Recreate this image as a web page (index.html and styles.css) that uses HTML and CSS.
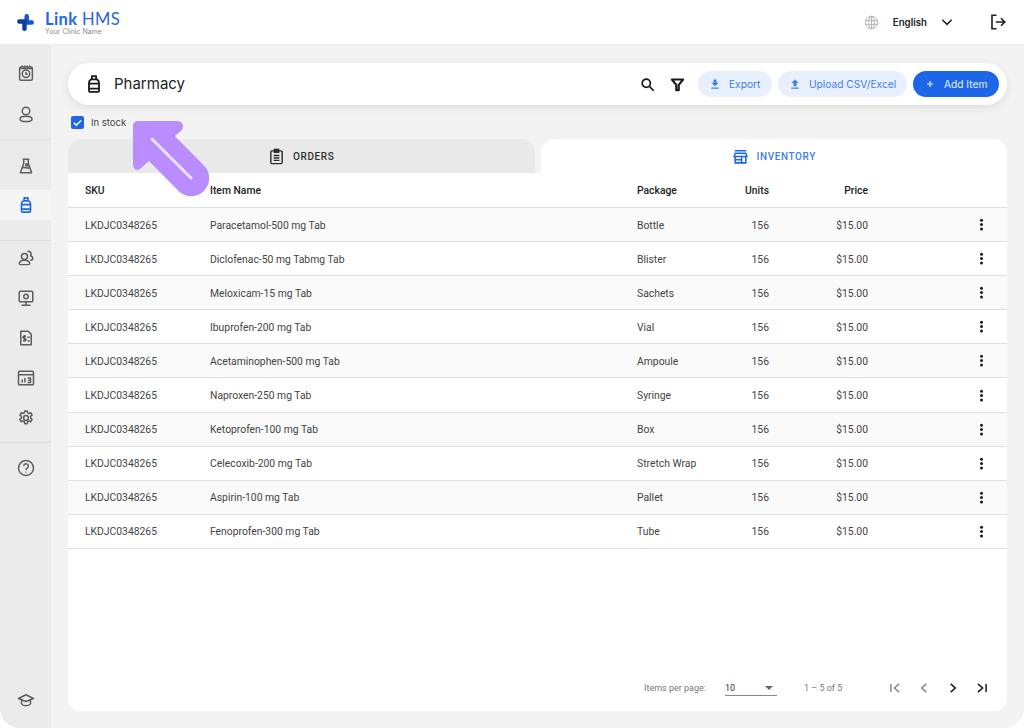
FILE: index.html
```html
<!DOCTYPE html>
<html lang="en">
<head>
    <meta charset="UTF-8">
    <title>Link HMS - Pharmacy</title>
    <link rel="stylesheet" href="styles.css">
</head>
<body>
    <svg class="defs" width="0" height="0">
        <symbol id="bottle" viewBox="0 0 24 24"><path d="M9.500 2.500h5v4h-5zM8.500 6.500h7c1.800 1 2.500 2.300 2.500 4v9.500a1.500 1.500 0 0 1-1.500 1.500h-9A1.500 1.500 0 0 1 6 20v-9.500c0-1.700.7-3 2.500-4zM6 11.500h12v6H6z" fill="none" stroke="currentColor" stroke-width="2.200" stroke-linejoin="round"/></symbol>
        <symbol id="kebab" viewBox="0 0 24 24"><circle cx="12" cy="5" r="2.400"/><circle cx="12" cy="12" r="2.400"/><circle cx="12" cy="19" r="2.400"/></symbol>
    </svg>
    <div class="app">
        <header class="topbar">
            <div class="brand">
                <svg class="brand-mark" viewBox="0 0 17 17" width="17" height="17" fill="none" stroke-width="4.500" stroke-linejoin="round" stroke-linecap="round"><path d="M9.700 2.300V8.500H14.700" stroke="#1557cf"/><path d="M2.300 7.500H7.500V14.700" stroke="#0d3f9e"/></svg>
                <div class="brand-text">
                    <div class="brand-name"><span class="brand-link">Link</span> HMS</div>
                    <div class="brand-sub">Your Clinic Name</div>
                </div>
            </div>
            <div class="topbar-right">
                <svg class="globe" viewBox="0 0 24 24" width="15" height="15" fill="none" stroke="#b5b5b5" stroke-width="1.600"><circle cx="12" cy="12" r="10"/><ellipse cx="12" cy="12" rx="4.500" ry="10"/><path d="M2.500 9h19M2.500 15h19M12 2v20"/></svg>
                <span class="lang">English</span>
                <svg class="chev" viewBox="0 0 24 24" width="14" height="14" fill="none" stroke="#222" stroke-width="2.600"><path d="M4 8l8 8 8-8"/></svg>
                <svg class="logout" viewBox="0 0 24 24" width="18" height="18" fill="none" stroke="#222" stroke-width="2.200"><path d="M10 3H4v18h6M9 12h12M16 7l5 5-5 5"/></svg>
            </div>
        </header>
        <div class="body">
            <nav class="sidebar">
                <div class="nav-group nav-schedule">
                    <a class="nav-item"><svg viewBox="0 0 24 24" class="nav-icon"><rect x="3.500" y="4" width="17" height="17.500" rx="2"/><circle cx="12" cy="13" r="5"/><path d="M12 10.500V13.500h2.200M3.500 6h17M7 2v2M10.300 2v2M13.700 2v2M17 2v2"/></svg></a>
                    <a class="nav-item"><svg viewBox="0 0 24 24" class="nav-icon"><circle cx="12" cy="8" r="5"/><ellipse cx="12" cy="18.500" rx="8" ry="3.500"/></svg></a>
                </div>
                <div class="nav-group nav-stores">
                    <a class="nav-item"><svg viewBox="0 0 24 24" class="nav-icon"><path d="M7.500 3h9M9 3v5.500L4.500 21h15L15 8.500V3M7 14.500c3-2 6 1.500 10 0"/><circle cx="13" cy="10.500" r="1.500"/></svg></a>
                    <a class="nav-item active"><svg class="nav-icon-solid"><use href="#bottle"/></svg></a>
                </div>
                <div class="nav-group nav-admin">
                    <a class="nav-item"><svg viewBox="0 0 24 24" class="nav-icon"><circle cx="10" cy="10" r="4"/><path d="M3 20c0-3.500 3-5 7-5s7 1.500 7 5c0 1-14 1-14 0zM14 3.500a3.500 3.500 0 0 1 4 5.500c2 .5 3 2 3 4 0 1.500-2 2-3.500 2"/></svg></a>
                    <a class="nav-item"><svg viewBox="0 0 24 24" class="nav-icon"><rect x="3" y="3" width="18" height="14" rx="1.500"/><circle cx="12" cy="10" r="3"/><path d="M12 17v4M6 21.500h12"/></svg></a>
                    <a class="nav-item"><svg viewBox="0 0 24 24" class="nav-icon"><path d="M5 3h10l4 4v14H5zM14 11h3M14 16h3M10 8v9M12 9.500H9.500a1.500 1.500 0 0 0 0 3h1a1.500 1.500 0 0 1 0 3H8"/></svg></a>
                    <a class="nav-item"><svg viewBox="0 0 24 24" class="nav-icon"><rect x="2" y="3" width="20" height="18" rx="1.500"/><path d="M2 7.500h20M7 18v-4M10.500 18v-6M14 12h4v3h-3M18 15v3h-4"/></svg></a>
                    <a class="nav-item"><svg viewBox="0 0 24 24" class="nav-icon"><circle cx="12" cy="12" r="3.200"/><path d="M10.300 2.500h3.400l.5 2.600 1.700.9 2.500-.9 1.700 3-2 1.700v2.400l2 1.700-1.700 3-2.500-.9-1.700.9-.5 2.600h-3.400l-.5-2.600-1.700-.9-2.500.9-1.700-3 2-1.700V9.800l-2-1.700 1.700-3 2.500.9 1.700-.9z"/></svg></a>
                </div>
                <div class="nav-group nav-help">
                    <a class="nav-item"><svg viewBox="0 0 24 24" class="nav-icon"><circle cx="12" cy="12" r="10"/><path d="M9 9.500a3 3 0 1 1 4.500 2.600c-1 .6-1.500 1.200-1.500 2.400M12 17v1"/></svg></a>
                </div>
                <a class="nav-item nav-bottom"><svg viewBox="0 0 24 24" class="nav-icon"><path d="M12 5L2 10l10 4 10-4zM6 12.500V17c2 3.500 10 3.500 12 0v-4.500"/></svg></a>
            </nav>
            <main class="content">
                <section class="page-head">
                    <svg class="head-bottle"><use href="#bottle"/></svg>
                    <h1 class="page-title">Pharmacy</h1>
                    <div class="actions">
                        <svg class="tool tool-search" viewBox="0 0 24 24" fill="none" stroke="#1a1a1a" stroke-width="2.800"><circle cx="10" cy="10" r="6.500"/><path d="M15 15l7 7"/></svg>
                        <svg class="tool tool-filter" viewBox="0 0 24 24" fill="none" stroke="#1a1a1a" stroke-width="3.400" stroke-linejoin="round"><path d="M3 4h18l-7 8.500V21h-4v-8.500z"/></svg>
                        <button class="btn btn-soft btn-export"><svg viewBox="0 0 24 24" class="btn-icon solid"><path d="M9 3h6v6.500h4.500L12 16.500 4.500 9.500H9zM4.500 19h15v2.500h-15z"/></svg>Export</button>
                        <button class="btn btn-soft btn-upload"><svg viewBox="0 0 24 24" class="btn-icon solid"><path d="M9 16.500h6V10h4.500L12 3 4.500 10H9zM4.500 19h15v2.500h-15z"/></svg>Upload CSV/Excel</button>
                        <button class="btn btn-primary"><svg viewBox="0 0 24 24" class="btn-icon"><path d="M12 6v12M6 12h12"/></svg>Add Item</button>
                    </div>
                </section>
                <label class="stock">
                    <span class="check"><svg viewBox="0 0 24 24" width="11" height="11" fill="none" stroke="#fff" stroke-width="3"><path d="M4 12.500l5.500 5.500L20 7"/></svg></span>
                    In stock
                </label>
                <div class="tabs">
                    <div class="tab">
                        <svg viewBox="0 0 24 24" width="17" height="17" fill="none" stroke="#2b2b2b" stroke-width="2"><rect x="4" y="4" width="16" height="18" rx="1.500"/><rect x="9" y="2" width="6" height="4" fill="#2b2b2b"/><path d="M8 10.500h8M8 14h8M8 17.500h8"/></svg>
                        ORDERS
                    </div>
                    <div class="tab tab-active">
                        <svg viewBox="0 0 24 24" width="17" height="17" fill="none" stroke="#1d66e8" stroke-width="2.200"><path d="M4 4h16M3 12l1.500-4.500h15L21 12zM4.500 12v9h15v-9M4.500 16.500h9M13.500 12v9"/></svg>
                        INVENTORY
                    </div>
                </div>
                <section class="panel">
                    <div class="row row-head">
                        <div>SKU</div><div>Item Name</div><div>Package</div><div class="num">Units</div><div class="num">Price</div><div></div>
                    </div>
                    <div class="row"><div>LKDJC0348265</div><div>Paracetamol-500 mg Tab</div><div>Bottle</div><div class="num">156</div><div class="num">$15.00</div><svg class="kebab"><use href="#kebab"/></svg></div>
                    <div class="row"><div>LKDJC0348265</div><div>Diclofenac-50 mg Tabmg Tab</div><div>Blister</div><div class="num">156</div><div class="num">$15.00</div><svg class="kebab"><use href="#kebab"/></svg></div>
                    <div class="row"><div>LKDJC0348265</div><div>Meloxicam-15 mg Tab</div><div>Sachets</div><div class="num">156</div><div class="num">$15.00</div><svg class="kebab"><use href="#kebab"/></svg></div>
                    <div class="row"><div>LKDJC0348265</div><div>Ibuprofen-200 mg Tab</div><div>Vial</div><div class="num">156</div><div class="num">$15.00</div><svg class="kebab"><use href="#kebab"/></svg></div>
                    <div class="row"><div>LKDJC0348265</div><div>Acetaminophen-500 mg Tab</div><div>Ampoule</div><div class="num">156</div><div class="num">$15.00</div><svg class="kebab"><use href="#kebab"/></svg></div>
                    <div class="row"><div>LKDJC0348265</div><div>Naproxen-250 mg Tab</div><div>Syringe</div><div class="num">156</div><div class="num">$15.00</div><svg class="kebab"><use href="#kebab"/></svg></div>
                    <div class="row"><div>LKDJC0348265</div><div>Ketoprofen-100 mg Tab</div><div>Box</div><div class="num">156</div><div class="num">$15.00</div><svg class="kebab"><use href="#kebab"/></svg></div>
                    <div class="row"><div>LKDJC0348265</div><div>Celecoxib-200 mg Tab</div><div>Stretch Wrap</div><div class="num">156</div><div class="num">$15.00</div><svg class="kebab"><use href="#kebab"/></svg></div>
                    <div class="row"><div>LKDJC0348265</div><div>Aspirin-100 mg Tab</div><div>Pallet</div><div class="num">156</div><div class="num">$15.00</div><svg class="kebab"><use href="#kebab"/></svg></div>
                    <div class="row"><div>LKDJC0348265</div><div>Fenoprofen-300 mg Tab</div><div>Tube</div><div class="num">156</div><div class="num">$15.00</div><svg class="kebab"><use href="#kebab"/></svg></div>
                    <div class="pager">
                        <span class="pager-label">Items per page:</span>
                        <span class="pager-select">10<i class="caret"></i></span>
                        <span class="pager-range">1 – 5 of 5</span>
                        <div class="pager-nav">
                            <svg viewBox="0 0 24 24" stroke="#8a8a8a"><path d="M5 5v14M19 5l-8 7 8 7"/></svg>
                            <svg viewBox="0 0 24 24" stroke="#8a8a8a"><path d="M16 5l-8 7 8 7"/></svg>
                            <svg viewBox="0 0 24 24" stroke="#1a1a1a"><path d="M8 5l8 7-8 7"/></svg>
                            <svg viewBox="0 0 24 24" stroke="#1a1a1a"><path d="M5 5l8 7-8 7M19 5v14"/></svg>
                        </div>
                    </div>
                </section>
            </main>
        </div>
    </div>
    <svg class="pointer" viewBox="0 0 100 100" width="100" height="100">
        <path d="M8 3H47C53 3 55 9 51 13L44.700 18L74.700 48.300A18 18 0 0 1 49.300 73.700L19 43L11 50C7 54 3 51 3 46V8C3 5 5 3 8 3Z" fill="#b98cff"/>
        <path d="M22 21L61 60" stroke="#ebe3fb" stroke-width="3" stroke-linecap="round"/>
    </svg>
</body>
</html>
```

FILE: styles.css
```css
* {
    box-sizing: border-box;
}
html, body {
    margin: 0;
    height: 100%;
    background: #ffffff;
    overflow: hidden;
}
body {
    font-family: 'Inter', sans-serif;
    color: #222;
}
.defs {
    position: absolute;
}
.app {
    width: 1024px;
    height: 728px;
    display: flex;
    flex-direction: column;
    border-radius: 20px;
    overflow: hidden;
    background: #f3f3f3;
}

/* top bar */
.topbar {
    height: 45px;
    flex: none;
    background: #fff;
    border-bottom: 1px solid #eeeeee;
    display: flex;
    align-items: center;
    justify-content: space-between;
    padding: 0 17px;
}
.brand {
    display: flex;
    align-items: center;
    gap: 11px;
}
.brand-mark {
    margin-top: 1px;
}
.brand-text {
    margin-top: 2px;
}
.brand-name {
    font-family: 'Lato', sans-serif;
    font-size: 16.500px;
    line-height: 17px;
    color: #2a66d9;
    letter-spacing: .4px;
    margin-top: -1px;
}
.brand-link {
    font-weight: 700;
    color: #1d66e8;
}
.brand-sub {
    font-size: 7px;
    line-height: 7px;
    color: #8d8d8d;
}
.topbar-right {
    display: flex;
    align-items: center;
}
.lang {
    font-size: 9.700px;
    font-weight: 600;
    margin-left: 14px;
}
.chev {
    margin-left: 13px;
}
.logout {
    margin-left: 35px;
}

/* sidebar */
.body {
    flex: 1;
    display: flex;
    min-height: 0;
}
.sidebar {
    width: 51px;
    flex: none;
    background: #ebebeb;
    display: flex;
    flex-direction: column;
}
.nav-group {
    display: flex;
    flex-direction: column;
    border-bottom: 1px solid #dedede;
}
.nav-schedule {
    height: 95px;
    padding-top: 13px;
    gap: 11px;
}
.nav-stores {
    height: 101px;
    padding-top: 11px;
    gap: 9px;
}
.nav-admin {
    height: 202px;
    padding-top: 2px;
    gap: 10px;
}
.nav-help {
    border-bottom: 0;
    padding-top: 10px;
}
.nav-item {
    height: 30px;
    flex: none;
    display: flex;
    align-items: center;
    justify-content: center;
}
.nav-item.active {
    background: #f5f5f5;
}
.nav-icon {
    width: 18px;
    height: 18px;
    fill: none;
    stroke: #5e5e5e;
    stroke-width: 2;
    stroke-linejoin: round;
}
.nav-icon-solid {
    width: 18px;
    height: 18px;
    color: #1d66e8;
}
.nav-bottom {
    margin-top: auto;
    height: 56px;
}

/* main column */
.content {
    flex: 1;
    padding: 18px 17px 17px;
    display: flex;
    flex-direction: column;
    min-width: 0;
}
.page-head {
    height: 42px;
    flex: none;
    background: #fff;
    border-radius: 21px;
    box-shadow: 0 3px 10px rgba(0, 0, 0, .09);
    display: flex;
    align-items: center;
    padding: 0 8px 0 16px;
}
.head-bottle {
    width: 20px;
    height: 20px;
    color: #1a1a1a;
}
.page-title {
    font-size: 15px;
    font-weight: 400;
    margin: -1px 0 0 10px;
}
.actions {
    margin-left: auto;
    display: flex;
    align-items: center;
}
.tool {
    width: 15px;
    height: 15px;
}
.tool-search {
    margin-right: 15px;
}
.tool-filter {
    margin-right: 13px;
}
.btn {
    height: 26px;
    border: 0;
    border-radius: 13px;
    font-family: 'Inter', sans-serif;
    font-size: 10.200px;
    display: flex;
    align-items: center;
    padding: 0;
    margin-left: 6px;
}
.tool + .tool + .btn {
    margin-left: 0;
}
.btn-soft {
    background: #e8f0fe;
    color: #3f7eea;
}
.btn-export {
    width: 74px;
}
.btn-upload {
    width: 129px;
}
.btn-primary {
    width: 86px;
    background: #1d66e8;
    color: #e8f0fe;
}
.btn-icon {
    width: 12px;
    height: 12px;
    margin: 0 8px 0 11px;
    fill: none;
    stroke: currentColor;
    stroke-width: 2.400;
}
.btn-icon.solid {
    fill: currentColor;
    stroke: none;
}
.stock {
    height: 34px;
    flex: none;
    display: flex;
    align-items: center;
    font-size: 9.500px;
    color: #444;
    padding-left: 3px;
}
.check {
    width: 13px;
    height: 13px;
    background: #1d66e8;
    border-radius: 2px;
    display: flex;
    align-items: center;
    justify-content: center;
    margin-right: 7px;
}

/* tabs */
.tabs {
    display: flex;
    gap: 6px;
    height: 34px;
    flex: none;
}
.tab {
    flex: 1;
    background: #e9e9e9;
    border-radius: 14px 14px 0 0;
    display: flex;
    align-items: center;
    justify-content: center;
    gap: 8px;
    font-family: 'Roboto', sans-serif;
    font-size: 10px;
    font-weight: 500;
    letter-spacing: .6px;
    color: #333;
}
.tab-active {
    background: #fff;
    color: #3f7eea;
}

/* table */
.panel {
    flex: 1;
    background: #fff;
    border-radius: 0 0 12px 12px;
    display: flex;
    flex-direction: column;
    font-family: 'Roboto', sans-serif;
    font-size: 10.350px;
    color: #444;
}
.row {
    height: 34.100px;
    flex: none;
    display: grid;
    grid-template-columns: 125px 427px 80px 52px 99px 1fr;
    align-items: center;
    padding-left: 17px;
    padding-top: 1px;
    border-bottom: 1px solid #e0e0e0;
}
.row:nth-child(even) {
    background: #fafafa;
}
.row-head {
    height: 35px;
    padding-top: 0;
    color: #222;
    font-weight: 500;
}
.num {
    text-align: right;
}
.kebab {
    width: 15px;
    height: 15px;
    justify-self: end;
    margin: -1px 18px 0 0;
    fill: #1a1a1a;
}

/* pagination */
.pager {
    margin-top: auto;
    height: 46px;
    display: flex;
    align-items: center;
    padding-left: 576px;
    font-size: 9px;
    color: #777;
}
.pager-select {
    width: 52px;
    height: 16px;
    margin-left: 19px;
    border-bottom: 1px solid #8a8a8a;
    color: #333;
    display: flex;
    align-items: center;
    justify-content: space-between;
    padding-right: 4px;
}
.caret {
    width: 0;
    height: 0;
    border-left: 4px solid transparent;
    border-right: 4px solid transparent;
    border-top: 4px solid #666;
}
.pager-range {
    margin-left: 27px;
}
.pager-nav {
    margin-left: 46px;
    display: flex;
    gap: 15px;
}
.pager-nav svg {
    width: 14px;
    height: 14px;
    fill: none;
    stroke-width: 2.600;
}

/* purple pointer over the checkbox */
.pointer {
    position: absolute;
    left: 130px;
    top: 118px;
}
```
